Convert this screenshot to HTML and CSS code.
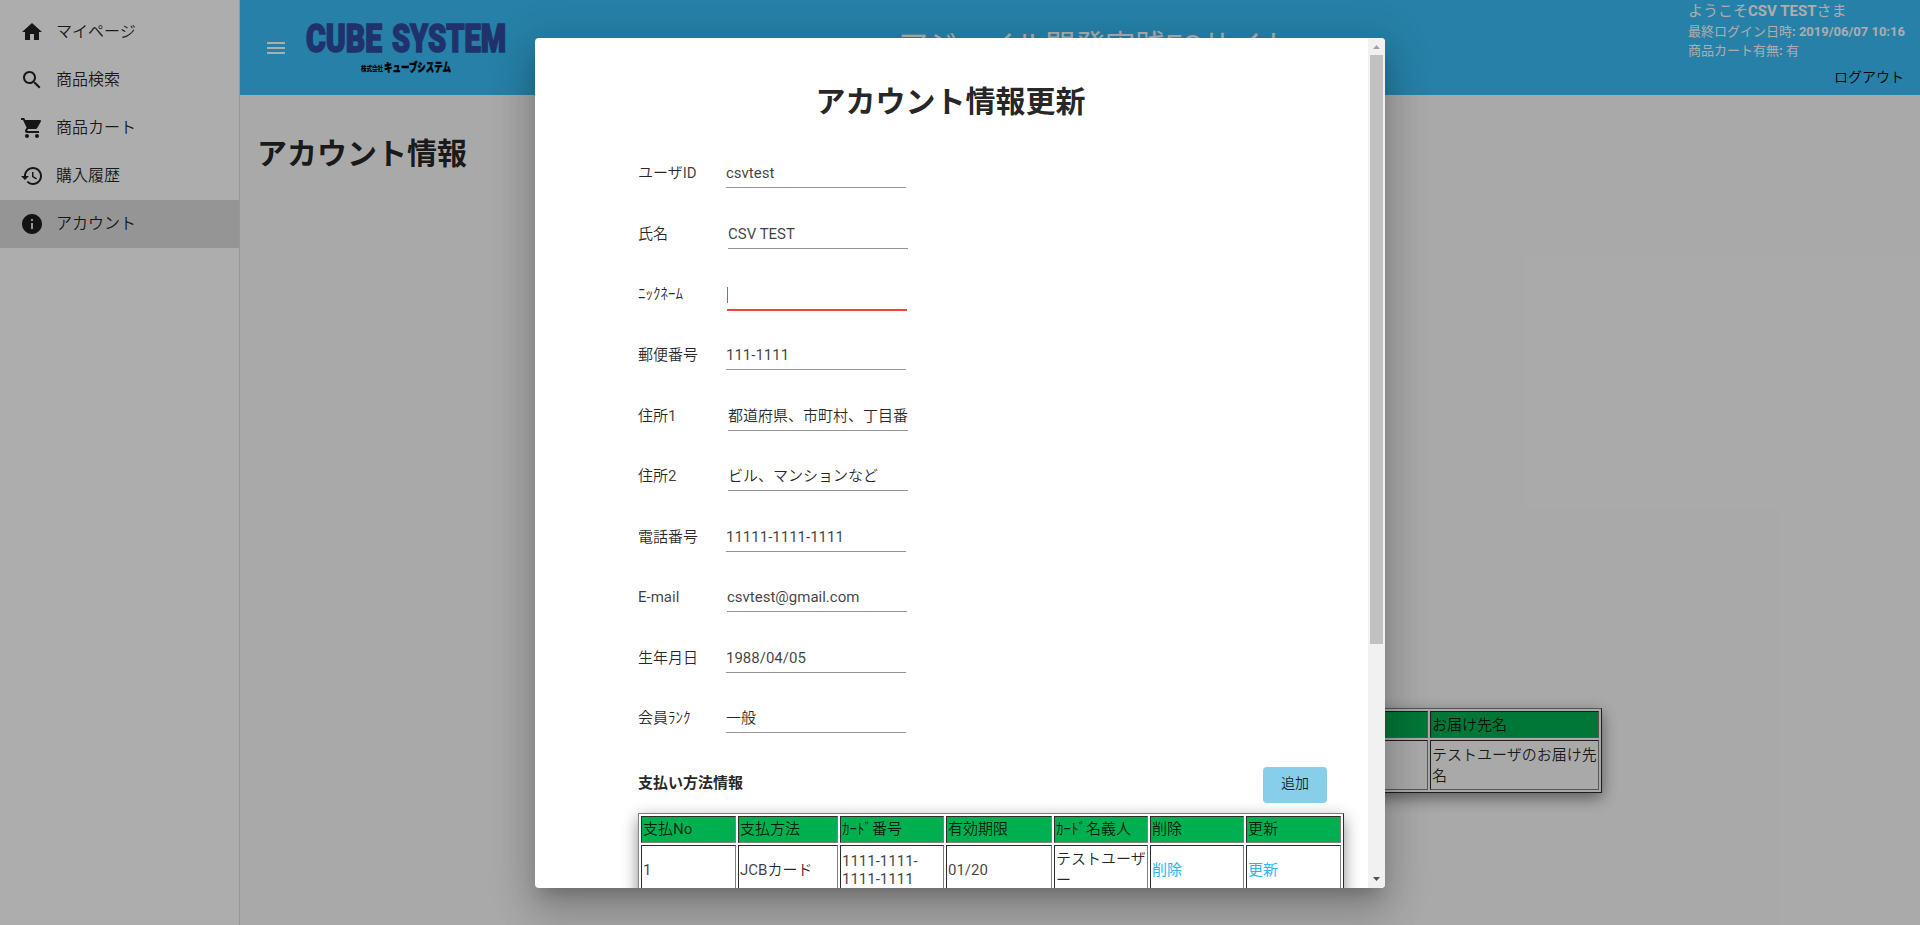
FILE: index.html
```html
<!DOCTYPE html>
<html lang="ja">
<head>
<meta charset="utf-8">
<title>アカウント情報更新</title>
<link rel="stylesheet" href="styles.css">
</head>
<body>
<div class="app">
  <nav class="sidebar">
    <a class="nav-item"><svg class="icon" viewBox="0 0 24 24"><path d="M10 20v-6h4v6h5v-8h3L12 3 2 12h3v8z"/></svg><span>マイページ</span></a>
    <a class="nav-item"><svg class="icon" viewBox="0 0 24 24"><path d="M15.5 14h-.79l-.28-.27C15.41 12.59 16 11.11 16 9.5 16 5.91 13.09 3 9.5 3S3 5.91 3 9.5 5.91 16 9.5 16c1.61 0 3.09-.59 4.23-1.57l.27.28v.79l5 4.99L20.49 19l-4.99-5zm-6 0C7.01 14 5 11.99 5 9.5S7.01 5 9.5 5 14 7.01 14 9.5 11.99 14 9.5 14z"/></svg><span>商品検索</span></a>
    <a class="nav-item"><svg class="icon" viewBox="0 0 24 24"><path d="M7 18c-1.1 0-1.99.9-1.99 2S5.9 22 7 22s2-.9 2-2-.9-2-2-2zM1 2v2h2l3.6 7.59-1.35 2.45c-.16.28-.25.61-.25.96 0 1.1.9 2 2 2h12v-2H7.42c-.14 0-.25-.11-.25-.25l.03-.12.9-1.63h7.45c.75 0 1.41-.41 1.75-1.03l3.58-6.49c.08-.14.12-.31.12-.48 0-.55-.45-1-1-1H5.21l-.94-2H1zm16 16c-1.1 0-1.99.9-1.99 2s.89 2 1.99 2 2-.9 2-2-.9-2-2-2z"/></svg><span>商品カート</span></a>
    <a class="nav-item"><svg class="icon" viewBox="0 0 24 24"><path d="M13 3c-4.97 0-9 4.03-9 9H1l3.89 3.89.07.14L9 12H6c0-3.87 3.13-7 7-7s7 3.13 7 7-3.13 7-7 7c-1.93 0-3.68-.79-4.94-2.06l-1.42 1.42C8.27 19.99 10.51 21 13 21c4.97 0 9-4.03 9-9s-4.03-9-9-9zm-1 5v5l4.28 2.54.72-1.21-3.5-2.08V8H12z"/></svg><span>購入履歴</span></a>
    <a class="nav-item nav-item-active"><svg class="icon" viewBox="0 0 24 24"><path d="M12 2C6.48 2 2 6.48 2 12s4.48 10 10 10 10-4.48 10-10S17.52 2 12 2zm1 15h-2v-6h2v6zm0-8h-2V7h2v2z"/></svg><span>アカウント</span></a>
  </nav>
  <div class="main">
    <header class="header">
      <svg class="icon menu" viewBox="0 0 24 24"><path d="M3 18h18v-2H3v2zm0-5h18v-2H3v2zm0-7v2h18V6H3z"/></svg>
      <svg class="logo" viewBox="0 0 204 60">
        <text class="logo-name" x="2" y="34" textLength="76" lengthAdjust="spacingAndGlyphs">CUBE</text>
        <text class="logo-name" x="88" y="34" textLength="114" lengthAdjust="spacingAndGlyphs">SYSTEM</text>
        <text class="logo-kind" x="57" y="52.500" textLength="22" lengthAdjust="spacingAndGlyphs">株式会社</text>
        <text class="logo-kana" x="80" y="54" textLength="67" lengthAdjust="spacingAndGlyphs">キューブシステム</text>
      </svg>
      <div class="site-title">アジャイル開発実践ECサイト</div>
      <div class="user">
        <div class="welcome">ようこそ<b>CSV TEST</b>さま</div>
        <div class="meta">最終ログイン日時<b>: 2019/06/07 10:16</b></div>
        <div class="meta">商品カート有無<b>:</b> 有</div>
        <a class="logout">ログアウト</a>
      </div>
    </header>
    <div class="page">
      <h1 class="page-title">アカウント情報</h1>
      <table class="grid delivery">
        <tr class="head"><td class="col-address"></td><td>お届け先名</td></tr>
        <tr class="body"><td></td><td>テストユーザのお届け先名</td></tr>
      </table>
    </div>
  </div>
</div>
<div class="backdrop">
  <div class="dialog">
    <div class="content">
      <h1 class="dialog-title">アカウント情報更新</h1>
      <div class="form">
        <div class="row"><span class="label">ユーザ<span class="latin">ID</span></span><span class="field latin">csvtest</span></div>
        <div class="row"><span class="label">氏名</span><span class="field latin shift-2">CSV TEST</span></div>
        <div class="row"><span class="label">ﾆｯｸﾈｰﾑ</span><span class="field shift-1 field-error"><i class="caret"></i></span></div>
        <div class="row"><span class="label">郵便番号</span><span class="field latin">111-1111</span></div>
        <div class="row"><span class="label">住所<span class="latin">1</span></span><span class="field shift-2">都道府県、市町村、丁目番</span></div>
        <div class="row"><span class="label">住所<span class="latin">2</span></span><span class="field shift-2">ビル、マンションなど</span></div>
        <div class="row"><span class="label">電話番号</span><span class="field latin">11111-1111-1111</span></div>
        <div class="row"><span class="label latin">E-mail</span><span class="field latin shift-1">csvtest@gmail.com</span></div>
        <div class="row"><span class="label">生年月日</span><span class="field latin">1988/04/05</span></div>
        <div class="row"><span class="label">会員ﾗﾝｸ</span><span class="field">一般</span></div>
      </div>
      <div class="section">
        <span class="section-title">支払い方法情報</span>
        <button class="add">追加</button>
      </div>
      <table class="grid payments">
        <colgroup><col class="w95"><col class="w100"><col class="w104"><col class="w106"><col class="w94"><col class="w94"><col class="w95"></colgroup>
        <tr class="head"><td>支払<span class="latin">No</span></td><td>支払方法</td><td>ｶｰﾄﾞ番号</td><td>有効期限</td><td>ｶｰﾄﾞ名義人</td><td>削除</td><td>更新</td></tr>
        <tr class="body"><td class="latin">1</td><td><span class="latin">JCB</span>カード</td><td class="latin">1111-1111-1111-1111</td><td class="latin">01/20</td><td>テストユーザー</td><td><a class="link">削除</a></td><td><a class="link">更新</a></td></tr>
      </table>
    </div>
    <div class="scrollbar">
      <svg class="arrow arrow-up" viewBox="0 0 17 17"><path d="M5 11h7L8.500 7z"/></svg>
      <div class="thumb"></div>
      <svg class="arrow arrow-down" viewBox="0 0 17 17"><path d="M5 6h7L8.500 10z"/></svg>
    </div>
  </div>
</div>
</body>
</html>
```
FILE: styles.css
```css
* { box-sizing: border-box; }
body {
  margin: 0;
  overflow: hidden;
  background: #fafafa;
  color: rgba(0, 0, 0, 0.87);
  font-family: Roboto, "Noto Sans CJK JP", sans-serif;
  font-size: 15px;
}
.app { display: flex; width: 1920px; height: 925px; }
.icon { width: 24px; height: 24px; fill: currentColor; flex: none; }

.sidebar {
  width: 240px;
  flex: none;
  padding-top: 8px;
  background: #fff;
  border-right: 1px solid #e0e0e0;
  font-size: 16px;
  font-weight: 350;
}
.nav-item { display: flex; align-items: center; gap: 12px; height: 48px; padding-left: 20px; }
.nav-item span { padding-bottom: 5px; }
.nav-item-active { background: #dcdcdc; }

.main { flex: 1; display: flex; flex-direction: column; min-width: 0; }
.header {
  display: flex;
  align-items: center;
  height: 95px;
  flex: none;
  padding: 0 16px 0 24px;
  background: #38bdf6;
  color: #fff;
}
.logo { width: 204px; height: 60px; margin: 0 0 0 16px; overflow: visible; }
.logo-name { font-family: Roboto, sans-serif; font-weight: 900; font-size: 39px; fill: #2e4ba0; stroke: #2e4ba0; stroke-width: 1.6px; }
.logo-kind { font-weight: 900; font-size: 7px; fill: #000; }
.logo-kana { font-weight: 900; font-size: 12px; fill: #000; stroke: #000; stroke-width: 0.4px; }
.site-title { flex: 1; margin-left: 390px; padding-bottom: 9px; font-size: 30px; white-space: nowrap; }
.user { display: flex; flex-direction: column; width: 216px; height: 95px; font-weight: 400; }
.welcome { height: 22px; line-height: 23px; font-size: 15px; }
.meta { height: 19px; line-height: 19px; font-size: 13px; white-space: nowrap; }
.user b { font-weight: 700; }
.logout { align-self: flex-end; margin-top: 7px; font-size: 14px; line-height: 20px; font-weight: 350; color: #000; }

.page { flex: 1; padding: 36px 17px 0; }
.page-title { margin: 0; font-size: 30px; line-height: 46px; font-weight: 700; }

.grid { border: 1px solid; border-color: #808080 #2b2b2b #2b2b2b #808080; border-spacing: 2px; table-layout: fixed; box-shadow: 0 5px 15px rgba(0, 0, 0, 0.45); }
.grid td { padding: 0 0 3px 1px; border: 1px solid; border-color: #2b2b2b #808080 #808080 #2b2b2b; font-weight: 350; word-break: break-word; }
.grid .latin { font-weight: 400; color: rgba(0, 0, 0, 0.76); }
.grid td.latin { padding-bottom: 0; }
.head td { height: 27px; background: #00b050; }
.body td { height: 50px; }
.delivery { width: 968px; margin: 531px 0 0 377px; }
.col-address { width: 791px; }

.backdrop {
  position: absolute;
  inset: 0;
  display: flex;
  align-items: flex-start;
  justify-content: center;
  padding-top: 38px;
  background: rgba(0, 0, 0, 0.32);
}
.dialog {
  display: flex;
  width: 850px;
  height: 850px;
  background: #fff;
  border-radius: 4px;
  overflow: hidden;
  box-shadow: 0 11px 15px -7px rgba(0, 0, 0, 0.2), 0 24px 38px 3px rgba(0, 0, 0, 0.14), 0 9px 46px 8px rgba(0, 0, 0, 0.12);
}
.content { flex: 1; height: 850px; padding: 41px 24px 0 103px; overflow: hidden; }
.dialog-title { margin: 0 81px 19.400px 0; font-size: 30px; line-height: 46px; text-align: center; font-weight: 700; }
.row { display: flex; align-items: flex-start; height: 60.560px; font-weight: 350; }
.label { width: 88px; padding-top: 17px; line-height: 25px; }
.field { width: 180px; height: 44px; padding-top: 17px; line-height: 25px; border-bottom: 1px solid #949494; white-space: nowrap; }
.row .latin { font-weight: 400; color: rgba(0, 0, 0, 0.76); }
.shift-1 { margin-left: 1px; }
.shift-2 { margin-left: 2px; }
.field-error { height: 46px; border-bottom: 2px solid #f44336; }
.caret { display: block; width: 1px; height: 16px; margin-top: 5px; background: #f44336; }
.section { display: flex; justify-content: space-between; align-items: center; height: 36px; margin: 17px 17px 10px 0; }
.section-title { font-weight: 700; margin-top: -6px; }
.add { width: 64px; height: 36px; padding: 0 0 5px; border: 0; border-radius: 4px; background: #87ceeb; color: rgba(0, 0, 0, 0.87); font: 350 14px Roboto, "Noto Sans CJK JP", sans-serif; }
.payments { width: 706px; }
.w100 { width: 100px; }
.w104 { width: 104px; }
.w106 { width: 106px; }
.w94 { width: 94px; }
.w95 { width: 95px; }
.link { color: #29b6f6; font-weight: 400; }

.scrollbar { display: flex; flex-direction: column; width: 17px; flex: none; background: #f1f1f1; }
.arrow { width: 17px; height: 17px; flex: none; }
.arrow-up { fill: #a3a3a3; }
.arrow-down { margin-top: auto; fill: #505050; }
.thumb { height: 589px; margin: 0 2px; background: #c1c1c1; }
```
